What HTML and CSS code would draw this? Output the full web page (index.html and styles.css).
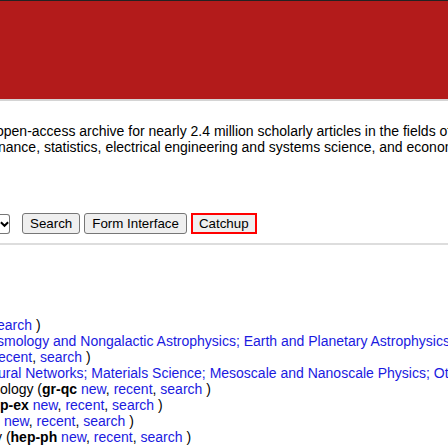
FILE: index.html
```html
<!DOCTYPE html>
<html lang="en">
<head>
<meta charset="utf-8">
<title>arXiv.org e-Print archive</title>
<link rel="stylesheet" href="styles.css">
</head>
<body>
<header class="masthead"></header>
<main class="content">
  <p class="intro">
    <span class="line cut4">open-access archive for nearly 2.4 million scholarly articles in the fields of physics, mathematics, computer science,</span>
    <span class="line cut2">nance, statistics, electrical engineering and systems science, and economics.</span>
  </p>
  <form class="search-row">
    <span class="select-tail"><svg width="10" height="8" viewBox="0 0 10 8"><path d="M1 2 L5 6 L9 2" fill="none" stroke="#000" stroke-width="2.2"/></svg></span>
    <button type="button" class="btn">Search</button>
    <button type="button" class="btn">Form Interface</button>
    <button type="button" class="btn btn-focus">Catchup</button>
  </form>
  <hr class="rule">
  <ul class="archives">
    <li class="cut3"><a href="#">earch</a> )</li>
    <li class="cut3"><a href="#">smology and Nongalactic Astrophysics; Earth and Planetary Astrophysics; High Energy Astrophysical Phenomena</a></li>
    <li class="cut2"><a href="#">ecent</a>, <a href="#">search</a> )</li>
    <li class="cut2"><a href="#">ural Networks; Materials Science; Mesoscale and Nanoscale Physics; Other Condensed Matter</a></li>
    <li>ology (<b>gr-qc</b> <a href="#">new</a>, <a href="#">recent</a>, <a href="#">search</a> )</li>
    <li><b>p-ex</b> <a href="#">new</a>, <a href="#">recent</a>, <a href="#">search</a> )</li>
    <li>&nbsp;<a href="#">new</a>, <a href="#">recent</a>, <a href="#">search</a> )</li>
    <li class="cut5">y (<b>hep-ph</b> <a href="#">new</a>, <a href="#">recent</a>, <a href="#">search</a> )</li>
  </ul>
</main>
</body>
</html>
```

FILE: styles.css
```css
html, body {
  margin: 0;
  padding: 0;
  overflow: hidden;
  background: #fff;
}
body {
  font-family: "Liberation Sans", Arial, sans-serif;
  font-size: 14px;
  color: #000;
  white-space: nowrap;
}
.masthead {
  height: 98px;
  background: #b31b1b;
  border-top: 1px solid #222;
  border-bottom: 2px solid #d4d4d4;
}
.content {
  display: flex;
  flex-direction: column;
}
.intro {
  margin: 22px 0 0;
  line-height: 16px;
  display: flex;
  flex-direction: column;
}
.line { display: block; }
.cut2 { text-indent: -2px; }
.cut3 { text-indent: -3px; }
.cut4 { text-indent: -4px; }
.cut5 { text-indent: -5px; }
.search-row {
  margin: 58px 0 0;
  display: flex;
  align-items: center;
  gap: 4px;
  height: 21px;
}
.select-tail {
  width: 10px;
  height: 20px;
  box-sizing: border-box;
  border: 1px solid #767676;
  border-left: none;
  border-radius: 0 3px 3px 0;
  display: flex;
  align-items: center;
  overflow: hidden;
  margin-right: 8px;
}
.btn {
  font-family: "Liberation Sans", Arial, sans-serif;
  font-size: 13.33px;
  height: 21px;
  padding: 1px 7px;
  background: #efefef;
  border: 1px solid #767676;
  border-radius: 3px;
  color: #000;
}
.btn-focus {
  padding: 1px 6px;
  border: 2px solid #f00;
  border-radius: 0;
}
.rule {
  margin: 9px 0 0;
  border: none;
  border-top: 2px solid #ddd;
  height: 0;
}
.archives {
  list-style: none;
  margin: 72px 0 0;
  padding: 0;
  line-height: 16px;
}
.archives a {
  color: #1a1adf;
  text-decoration: none;
}
.archives b { font-weight: bold; }
```
